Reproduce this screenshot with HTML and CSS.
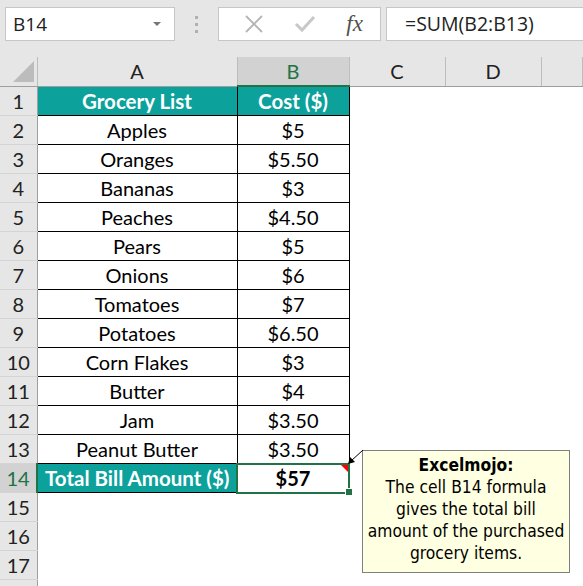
FILE: index.html
```html
<!DOCTYPE html>
<html>
<head>
  <meta charset="UTF-8">
  <title>Grocery List</title>
  <link rel="stylesheet" href="styles.css">
</head>
<body>

  <!-- formula bar -->
  <div class="formula-bar">
    <div class="name-box">
      <span>B14</span>
      <span class="drop"></span>
    </div>
    <div class="dots"><i></i><i></i><i></i></div>
    <div class="fx-buttons">
      <svg width="20" height="20" viewBox="0 0 20 20"><path d="M2 2 L18 18 M18 2 L2 18" stroke="#b4b4b4" stroke-width="1.8" fill="none"/></svg>
      <svg width="22" height="20" viewBox="0 0 22 20"><path d="M2 10 L8 16 L20 3" stroke="#c8c8c8" stroke-width="3" fill="none"/></svg>
      <span class="fx">fx</span>
    </div>
    <div class="formula">=SUM(B2:B13)</div>
  </div>

  <!-- sheet -->
  <div class="sheet">
    <table class="grid">
      <colgroup>
        <col style="width:37px">
        <col style="width:200px">
        <col style="width:112px">
        <col style="width:96px">
        <col style="width:96px">
        <col>
      </colgroup>
      <thead>
        <tr>
          <th class="corner"><span class="tri"></span></th>
          <th>A</th>
          <th class="sel">B</th>
          <th>C</th>
          <th>D</th>
          <th></th>
        </tr>
      </thead>
      <tbody id="rows">
      </tbody>
    </table>

    <div class="comment">
      <b>Excelmojo:</b><br>
      The cell B14 formula<br>
      gives the total bill<br>
      amount of the purchased<br>
      grocery items.
    </div>
    <svg class="arrow" width="20" height="20" viewBox="0 0 20 20">
      <path d="M16 2 L4 13" stroke="#000" stroke-width="1" fill="none"/>
      <path d="M1 16 L3 9 L8 14 Z" fill="#000"/>
    </svg>
  </div>

<script type="text/javascript">

const items = [
  ['Apples', '$5'],
  ['Oranges', '$5.50'],
  ['Bananas', '$3'],
  ['Peaches', '$4.50'],
  ['Pears', '$5'],
  ['Onions', '$6'],
  ['Tomatoes', '$7'],
  ['Potatoes', '$6.50'],
  ['Corn Flakes', '$3'],
  ['Butter', '$4'],
  ['Jam', '$3.50'],
  ['Peanut Butter', '$3.50']
];

const tbody = document.getElementById('rows');

// header row
let html = '<tr><th class="rh">1</th><td class="head">Grocery List</td><td class="head">Cost ($)</td><td></td><td></td><td></td></tr>';

// item rows
for (let i = 0; i < items.length; i++) {
  html += `<tr><th class="rh">${i + 2}</th><td class="data">${items[i][0]}</td><td class="data">${items[i][1]}</td><td></td><td></td><td></td></tr>`;
}

// total row
html += '<tr><th class="rh sel">14</th><td class="head">Total Bill Amount ($)</td><td class="data total">$57</td><td></td><td></td><td></td></tr>';

// empty rows
for (let r = 15; r <= 17; r++) {
  html += `<tr><th class="rh">${r}</th><td></td><td></td><td></td><td></td><td></td></tr>`;
}
html += '<tr><th class="rh"></th><td></td><td></td><td></td><td></td><td></td></tr>';

tbody.innerHTML = html;

</script>
</body>
</html>
```

FILE: styles.css
```css
body {
  margin: 0;
  width: 583px;
  height: 586px;
  overflow: hidden;
  background: #fff;
  font-family: Lato, "Open Sans", sans-serif;
}

/* formula bar */
.formula-bar {
  display: flex;
  align-items: center;
  height: 57px;
  padding: 0 0 0 5px;
  box-sizing: border-box;
  background: #e6e6e6;
}

.name-box {
  display: flex;
  align-items: center;
  justify-content: space-between;
  width: 170px;
  height: 34px;
  margin-top: -9px;
  padding: 0 13px 0 7px;
  box-sizing: border-box;
  background: #fff;
  border: 1px solid #c6c6c6;
  font-family: "Open Sans", sans-serif;
  font-size: 19px;
  color: #222;
}

.drop {
  width: 0;
  height: 0;
  border-left: 4px solid transparent;
  border-right: 4px solid transparent;
  border-top: 4px solid #777;
}

.dots {
  display: flex;
  flex-direction: column;
  gap: 4px;
  margin: -9px 20px 0 20px;
}

.dots i {
  width: 3px;
  height: 3px;
  background: #b0b0b0;
}

.fx-buttons {
  display: flex;
  align-items: center;
  justify-content: space-around;
  width: 163px;
  height: 34px;
  margin-top: -9px;
  box-sizing: border-box;
  padding: 0 2px 0 10px;
  background: #fff;
  border: 1px solid #c6c6c6;
}

.fx {
  font-family: "Liberation Serif", serif;
  font-style: italic;
  font-size: 23px;
  color: #505050;
}

.formula {
  flex: 1;
  height: 34px;
  margin: -9px 0 0 5px;
  padding-left: 18px;
  box-sizing: border-box;
  background: #fff;
  border: 1px solid #c6c6c6;
  border-right: none;
  font-family: "Open Sans", sans-serif;
  font-size: 19.5px;
  line-height: 31px;
  color: #222;
}

/* sheet */
.sheet {
  position: relative;
}

.grid {
  width: 100%;
  table-layout: fixed;
  border-collapse: collapse;
  font-size: 20px;
}

.grid th {
  height: 28px;
  padding: 0;
  font-weight: normal;
  background: #e6e6e6;
  color: #222;
  border-right: 1px solid #bdbdbd;
  border-bottom: 1px solid #9e9e9e;
}

.grid th.sel {
  background: #d2d2d2;
  color: #217346;
  border-bottom: 2px solid #217346;
}

.grid td {
  height: 28px;
  padding: 0;
  text-align: center;
  white-space: nowrap;
}

.grid th.corner {
  position: relative;
}

.tri {
  position: absolute;
  right: 3px;
  bottom: 4px;
  width: 0;
  height: 0;
  border-left: 21px solid transparent;
  border-bottom: 21px solid #bcbcbc;
}

.grid th.rh {
  text-align: center;
  border-right: 1px solid #9e9e9e;
  border-bottom: 1px solid #d4d4d4;
}

.grid th.rh.sel {
  border-bottom: 1px solid #d4d4d4;
  border-right: 2px solid #217346;
}

.head {
  background: #0da19c;
  color: #fff;
  font-weight: bold;
  font-size: 20.5px;
  border: 1px solid #000;
}

.data {
  color: #000;
  border: 1px solid #000;
}

.total {
  position: relative;
  font-weight: bold;
  outline: 2px solid #217346;
  outline-offset: -1px;
}

/* comment marker */
.total::before {
  content: "";
  position: absolute;
  top: 1px;
  right: 1px;
  border-left: 7px solid transparent;
  border-top: 7px solid #f00;
}

/* fill handle */
.total::after {
  content: "";
  position: absolute;
  right: -4px;
  bottom: -4px;
  width: 6px;
  height: 6px;
  background: #217346;
  border: 1px solid #fff;
}

.comment {
  position: absolute;
  left: 362px;
  top: 393px;
  width: 208px;
  height: 123px;
  box-sizing: border-box;
  padding: 3px 0;
  background: #ffffe1;
  border: 1px solid #7f7f7f;
  font-family: "DejaVu Sans Condensed", "DejaVu Sans", sans-serif;
  font-size: 17.3px;
  line-height: 22px;
  color: #000;
  text-align: center;
}

.arrow {
  position: absolute;
  left: 347px;
  top: 391px;
}
```
